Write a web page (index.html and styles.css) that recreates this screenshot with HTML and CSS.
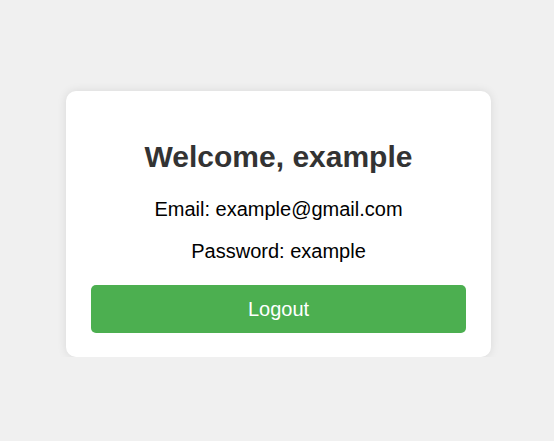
FILE: index.html
```html
<!DOCTYPE html>
<html lang="en">
<head>
<meta charset="utf-8">
<title>Welcome</title>
<link rel="stylesheet" href="styles.css">
</head>
<body>
<main class="page">
  <section class="card">
    <h2 class="title">Welcome, example</h2>
    <p class="info">Email: example@gmail.com</p>
    <p class="info">Password: example</p>
    <button class="logout" type="button">Logout</button>
  </section>
</main>
</body>
</html>
```
FILE: styles.css
```css
html, body {
  margin: 0;
  padding: 0;
}
body {
  background: #f0f0f0;
  font-family: "Liberation Sans", Arial, sans-serif;
}
.page {
  display: flex;
  justify-content: center;
  padding: 91px 0 0 3px;
}
.card {
  width: 375px;
  background: #fff;
  border-radius: 10px;
  padding: 25px 25px 24px;
  box-shadow: 0 0 10px rgba(0, 0, 0, 0.1);
  text-align: center;
}
.title {
  margin: 24px 0 24px;
  font-size: 30px;
  font-weight: bold;
  color: #333;
}
.info {
  margin: 0 0 19px;
  font-size: 20px;
  color: #000;
}
.info + .info {
  margin-bottom: 22px;
}
.logout {
  display: block;
  width: 100%;
  height: 48px;
  border: none;
  border-radius: 5px;
  background: #4caf50;
  color: #fff;
  font-family: "Liberation Sans", Arial, sans-serif;
  font-size: 20px;
  cursor: pointer;
}
```
